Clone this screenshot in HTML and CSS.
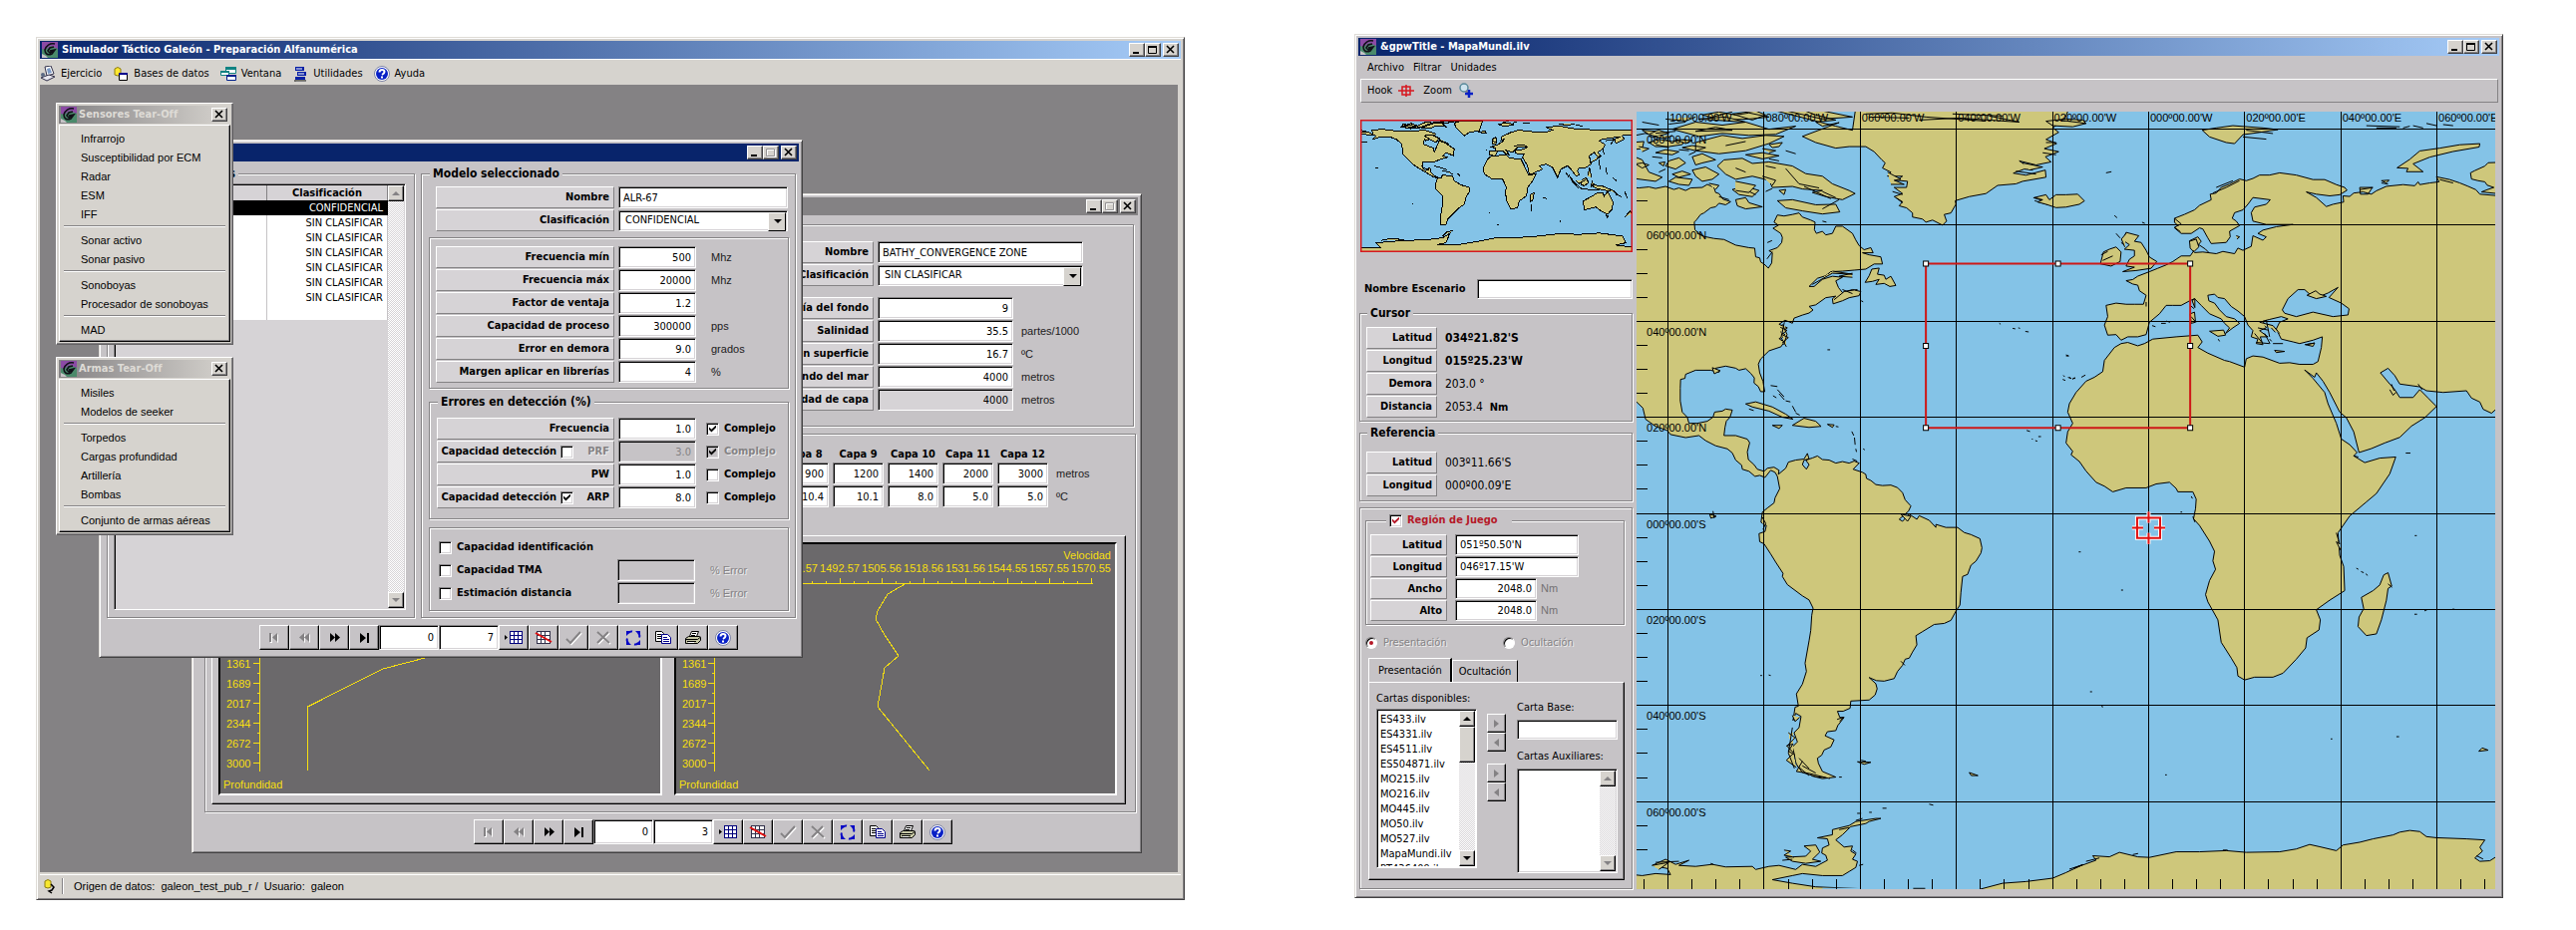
FILE: index.html
```html
<!DOCTYPE html>
<html lang="es">
<head>
<meta charset="utf-8">
<title>Simulador Táctico Galeón</title>
<link rel="stylesheet" href="styles.css">
</head>
<body>
<svg class="defs" aria-hidden="true">
  <symbol id="logo" viewBox="0 0 16 16"><rect width="16" height="16" fill="#4a8a6b"/><path d="M0 0h16v7L9 4 3 8 0 7z" fill="#8c4aa5"/><path d="M0 12l4 2 2 2H0z" fill="#c6c3c6"/><path d="M13 2C8 1 4 4 3 8c0 4 3 6 7 4l3-4-5 1M12 5L8 6 6 9l2 2 5-3" fill="none" stroke="#101018" stroke-width="1.6"/></symbol>
  <symbol id="first" viewBox="0 0 20 16"><path d="M6 4h2v9H6zM14 4v9L9 8.500z" fill="#fff"/><path d="M5 3h2v9H5zM13 3v9L8 7.500z" fill="#848284"/></symbol>
  <symbol id="prev" viewBox="0 0 20 16"><path d="M11 4v9L6 8.500zM16 4v9l-5-4.500z" fill="#fff"/><path d="M10 3v9L5 7.500zM15 3v9l-5-4.500z" fill="#848284"/></symbol>
  <symbol id="next" viewBox="0 0 20 16"><path d="M6 3v9l5-4.500zM11 3v9l5-4.500z"/></symbol>
  <symbol id="last" viewBox="0 0 20 16"><path d="M6 3v10l6-5zM13 3h2v10h-2z"/></symbol>
  <symbol id="grid" viewBox="0 0 20 16"><path d="M1 5v5l3-2.500z"/><path d="M6 2h12v12H6z" fill="#fff"/><path d="M6 1.500h13M6 5.500h13M6 9.500h13M6 13.500h13M6.500 1v13M10.500 1v13M14.500 1v13M18.500 1v13" stroke="#00007b" fill="none"/></symbol>
  <symbol id="nogrid" viewBox="0 0 20 16"><path d="M3 2h13v12H3z" fill="#fff"/><path d="M3 1.500h14M3 5.500h14M3 9.500h14M3 13.500h14M3.500 1v13M7.500 1v13M11.500 1v13M16.500 1v13" stroke="#31304a" fill="none"/><path d="M2 3l16 9" stroke="#e01010" stroke-width="2"/></symbol>
  <symbol id="ok" viewBox="0 0 20 16"><path d="M4 10l4 4 10-11" stroke="#fff" stroke-width="2" fill="none"/><path d="M3 9l4 4L17 2" stroke="#848284" stroke-width="2" fill="none"/></symbol>
  <symbol id="cancel" viewBox="0 0 20 16"><path d="M5 3l12 11M16 3L5 14" stroke="#fff" stroke-width="2"/><path d="M4 2l12 11M15 2L4 13" stroke="#848284" stroke-width="2"/></symbol>
  <symbol id="cycle" viewBox="0 0 20 16"><path d="M3 1h5L3 6zM17 1v5l-5-5zM17 15h-5l5-5zM3 15v-5l5 5z" fill="#0808c6"/><path d="M5 3Q7 1 9 1.500M15 3q2 2 1 4.500M15 13q-2 2-4 1.500M5 13q-2-2-1-4.500" stroke="#0808c6" stroke-width="2" fill="none"/></symbol>
  <symbol id="copy" viewBox="0 0 20 16"><path d="M2.500 1.500h6l2 2v8h-8z" fill="#fff" stroke="#000"/><path d="M4 4.500h4M4 6.500h5M4 8.500h5" stroke="#000"/><path d="M8.500 4.500h6l3 3v6h-9z" fill="#fff" stroke="#00008c"/><path d="M10 7.500h4M10 9.500h6M10 11.500h6" stroke="#00008c"/></symbol>
  <symbol id="print" viewBox="0 0 20 16"><path d="M6.500 6.500l2-5h7l-2 5z" fill="#fff" stroke="#000"/><path d="M9 3.500h4M8 5.500h4" stroke="#000"/><path d="M2.500 8.500l3-2h11l1 1v3l-3 3h-12z" fill="#c6c7a5" stroke="#000"/><path d="M2.500 9.500h12l3-2.500M4 11.500h9" stroke="#000" fill="none"/><path d="M5 12.500h6" stroke="#fff"/></symbol>
  <symbol id="help" viewBox="0 0 16 16"><circle cx="8" cy="8" r="7.500" fill="#fff" stroke="#7b82a5"/><circle cx="8" cy="8" r="6" fill="#0820c6"/><path d="M5.500 6.500q0-2.500 2.500-2.500t2.500 2q0 1.500-2.500 3M8 10.500v2" stroke="#fff" stroke-width="2" fill="none"/></symbol>
  <symbol id="min" viewBox="0 0 12 10"><path d="M2 7h6v2H2z"/></symbol>
  <symbol id="max" viewBox="0 0 12 10"><path d="M1.500 1.500h8v7h-8z" fill="none" stroke="#000"/><path d="M1 1h9v2H1z"/></symbol>
  <symbol id="maxoff" viewBox="0 0 12 10"><path d="M2.500 2.500h8v7h-8z" fill="none" stroke="#fff"/><path d="M1.500 1.500h8v7h-8z" fill="none" stroke="#949294"/></symbol>
  <symbol id="close" viewBox="0 0 12 10"><path d="M2 1l7 7M9 1L2 8" stroke="#000" stroke-width="1.600"/></symbol>
</svg>

<main class="screens">
<section class="win app">
  <header class="titlebar grad"><svg class="ico"><use href="#logo"/></svg><h1>Simulador Táctico Galeón - Preparación Alfanumérica</h1>
    <span class="ctl"><button aria-label="Minimizar"><svg><use href="#min"/></svg></button><button aria-label="Maximizar"><svg><use href="#max"/></svg></button><button class="x" aria-label="Cerrar"><svg><use href="#close"/></svg></button></span></header>
  <nav class="menubar">
    <button><svg class="ico" viewBox="0 0 16 16"><path d="M5 1l6-1 3 8-7 2z" fill="#fff" stroke="#31304a"/><path d="M7 3l3-1 2 5-4 1z" fill="#7b9ac6"/><path d="M1 12l8-3 6 2-8 4z" fill="#e7e7ef" stroke="#31304a"/><circle cx="3" cy="9" r="2" fill="#5a6984"/></svg>Ejercicio</button>
    <button><svg class="ico" viewBox="0 0 16 16"><path d="M2 3q3-3 6 0v6q-3 2-6 0z" fill="#ffe731" stroke="#8c7d10"/><path d="M6.500 7.500h8v7h-8z" fill="#fff" stroke="#000"/><path d="M6 7h9v2H6z" fill="#00008c"/></svg>Bases de datos</button>
    <button><svg class="ico" viewBox="0 0 16 16"><path d="M5.500 1.500h10v6h-10z" fill="#fff" stroke="#108282"/><path d="M5 1h11v3H5z" fill="#108282"/><path d="M.5 5.500h8v4h-8z" fill="#fff" stroke="#108282"/><path d="M0 5h9v2H0z" fill="#108282"/><path d="M6.500 9.500h9v5h-9z" fill="#fff" stroke="#00208c"/><path d="M6 9h10v2H6z" fill="#00208c"/></svg>Ventana</button>
    <button><svg class="ico" viewBox="0 0 16 16"><path d="M3 1h9v4H3zM5 6h9v4H5zM3 11h10v3H3z" fill="#0820a5"/><path d="M4 3h6M6 8h6M4 15.500h10" stroke="#fff"/><path d="M2 15h12" stroke="#000"/></svg>Utilidades</button>
    <button><svg class="ico"><use href="#help"/></svg>Ayuda</button>
  </nav>
  <div class="desktop">

    <section class="win child bathy">
      <header class="titlebar gray"><span class="ctl"><button aria-label="Minimizar"><svg><use href="#min"/></svg></button><button aria-label="Maximizar" disabled><svg><use href="#maxoff"/></svg></button><button class="x" aria-label="Cerrar"><svg><use href="#close"/></svg></button></span></header>
      <div class="bathy-body">
        <div class="etched bathy-form">
          <div class="rows">
            <div class="row"><label class="tag" for="b1">Nombre</label><input class="wide" id="b1" value="BATHY_CONVERGENCE ZONE"></div>
            <div class="row"><label class="tag" for="b2">Clasificación</label><span class="combo wide"><select id="b2"><option>SIN CLASIFICAR</option></select></span></div>
          </div>
          <div class="rows">
            <div class="row"><label class="tag" for="b3">Categoría del fondo</label><input class="num" id="b3" value="9"></div>
            <div class="row"><label class="tag" for="b4">Salinidad</label><input class="num" id="b4" value="35.5"><span class="unit">partes/1000</span></div>
            <div class="row"><label class="tag" for="b5">Temp. en superficie</label><input class="num" id="b5" value="16.7"><span class="unit">ºC</span></div>
            <div class="row"><label class="tag" for="b6">Fondo del mar</label><input class="num" id="b6" value="4000"><span class="unit">metros</span></div>
            <div class="row"><label class="tag" for="b7">Profundidad de capa</label><input class="num ro" id="b7" value="4000" readonly><span class="unit">metros</span></div>
          </div>
        </div>
        <div class="etched bathy-data">
          <table class="layers">
            <thead><tr><th>Capa 8</th><th>Capa 9</th><th>Capa 10</th><th>Capa 11</th><th>Capa 12</th><th></th></tr></thead>
            <tbody>
            <tr><td><input aria-label="Profundidad 8" value="900"></td><td><input aria-label="Profundidad 9" value="1200"></td><td><input aria-label="Profundidad 10" value="1400"></td><td><input aria-label="Profundidad 11" value="2000"></td><td><input aria-label="Profundidad 12" value="3000"></td><td class="unit">metros</td></tr>
            <tr><td><input aria-label="Temperatura 8" value="10.4"></td><td><input aria-label="Temperatura 9" value="10.1"></td><td><input aria-label="Temperatura 10" value="8.0"></td><td><input aria-label="Temperatura 11" value="5.0"></td><td><input aria-label="Temperatura 12" value="5.0"></td><td class="unit">ºC</td></tr>
            </tbody>
          </table>
          <div class="charts">
            <div class="chart"><svg>
              <path class="ax" d="M39.500 40V228M33 119.500h7M33 139.500h7M33 159.500h7M33 179.500h7M33 199.500h7M33 219.500h7M37 129.500h3M37 149.500h3M37 169.500h3M37 189.500h3M37 209.500h3"/>
              <path class="ax" d="M230 105L211 112.500 163 125 87.500 163V227"/>
              <g class="ct"><text x="6" y="124">1361</text><text x="6" y="144">1689</text><text x="6" y="164">2017</text><text x="6" y="184">2344</text><text x="6" y="204">2672</text><text x="6" y="224">3000</text><text x="3" y="245">Profundidad</text></g></svg></div>
            <div class="chart"><svg>
              <path class="ax" d="M38.500 40V228M32 119.500h7M32 139.500h7M32 159.500h7M32 179.500h7M32 199.500h7M32 219.500h7M36 129.500h3M36 149.500h3M36 169.500h3M36 189.500h3M36 209.500h3"/>
              <path class="ax" d="M100 39.500H418M164.500 34v6M206.500 34v6M248.500 34v6M290.500 34v6M332.500 34v6M374.500 34v6M416.500 34v6M136.500 37v3M150.500 37v3M178.500 37v3M192.500 37v3M220.500 37v3M234.500 37v3M262.500 37v3M276.500 37v3M304.500 37v3M318.500 37v3M346.500 37v3M360.500 37v3M388.500 37v3M402.500 37v3"/>
              <path class="ax" d="M230 39.500L212 50 202 67 200 75 209 91 223 112 209 124 202 163 254 227"/>
              <g class="ct"><text x="6" y="124">1361</text><text x="6" y="144">1689</text><text x="6" y="164">2017</text><text x="6" y="184">2344</text><text x="6" y="204">2672</text><text x="6" y="224">3000</text><text x="3" y="245">Profundidad</text></g>
              <g class="ct mid"><text x="122" y="28">1479.57</text><text x="164" y="28">1492.57</text><text x="206" y="28">1505.56</text><text x="248" y="28">1518.56</text><text x="290" y="28">1531.56</text><text x="332" y="28">1544.55</text><text x="374" y="28">1557.55</text><text x="416" y="28">1570.55</text></g>
              <text class="ct end" x="436" y="15">Velocidad</text></svg></div>
          </div>
        </div>
        <div class="navbar">
          <button class="tb" aria-label="Primero" disabled><svg><use href="#first"/></svg></button><button class="tb" aria-label="Anterior" disabled><svg><use href="#prev"/></svg></button><button class="tb" aria-label="Siguiente"><svg><use href="#next"/></svg></button><button class="tb" aria-label="Último"><svg><use href="#last"/></svg></button><input aria-label="Posición" value="0"><input aria-label="Total" value="3"><button class="tb" aria-label="Insertar"><svg><use href="#grid"/></svg></button><button class="tb" aria-label="Borrar"><svg><use href="#nogrid"/></svg></button><button class="tb" aria-label="Aceptar" disabled><svg><use href="#ok"/></svg></button><button class="tb" aria-label="Cancelar" disabled><svg><use href="#cancel"/></svg></button><button class="tb" aria-label="Recargar"><svg><use href="#cycle"/></svg></button><button class="tb" aria-label="Copiar"><svg><use href="#copy"/></svg></button><button class="tb" aria-label="Imprimir"><svg><use href="#print"/></svg></button><button class="tb" aria-label="Ayuda"><svg><use href="#help"/></svg></button>
        </div>
      </div>
    </section>

    <section class="win child model">
      <header class="titlebar navy"><span class="ctl"><button aria-label="Minimizar"><svg><use href="#min"/></svg></button><button aria-label="Maximizar" disabled><svg><use href="#maxoff"/></svg></button><button class="x" aria-label="Cerrar"><svg><use href="#close"/></svg></button></span></header>
      <div class="model-body">
        <fieldset class="etched models"><legend>Modelos existentes</legend>
          <div class="listbox">
            <table>
              <thead><tr><th></th><th>Clasificación</th></tr></thead>
              <tbody><tr class="sel"><td></td><td>CONFIDENCIAL</td></tr><tr><td></td><td>SIN CLASIFICAR</td></tr><tr><td></td><td>SIN CLASIFICAR</td></tr><tr><td></td><td>SIN CLASIFICAR</td></tr><tr><td></td><td>SIN CLASIFICAR</td></tr><tr><td></td><td>SIN CLASIFICAR</td></tr><tr><td></td><td>SIN CLASIFICAR</td></tr><tr><td></td><td></td></tr></tbody>
            </table>
            <div class="scroll"><button class="up" aria-label="Subir" disabled></button><button class="down" aria-label="Bajar" disabled></button></div>
          </div>
        </fieldset>
        <fieldset class="etched selected"><legend>Modelo seleccionado</legend>
          <div class="rows top">
            <div class="row"><label class="tag" for="m1">Nombre</label><input class="wide" id="m1" value="ALR-67"></div>
            <div class="row"><label class="tag" for="m2">Clasificación</label><span class="combo wide"><select id="m2"><option>CONFIDENCIAL</option></select></span></div>
          </div>
          <div class="etched rows block">
            <div class="row"><label class="tag" for="m3">Frecuencia mín</label><input class="num" id="m3" value="500"><span class="unit">Mhz</span></div>
            <div class="row"><label class="tag" for="m4">Frecuencia máx</label><input class="num" id="m4" value="20000"><span class="unit">Mhz</span></div>
            <div class="row"><label class="tag" for="m5">Factor de ventaja</label><input class="num" id="m5" value="1.2"></div>
            <div class="row"><label class="tag" for="m6">Capacidad de proceso</label><input class="num" id="m6" value="300000"><span class="unit">pps</span></div>
            <div class="row"><label class="tag" for="m7">Error en demora</label><input class="num" id="m7" value="9.0"><span class="unit">grados</span></div>
            <div class="row"><label class="tag" for="m8">Margen aplicar en librerías</label><input class="num" id="m8" value="4"><span class="unit">%</span></div>
          </div>
          <fieldset class="etched rows errors"><legend>Errores en detección (%)</legend>
            <div class="row"><label class="tag" for="e1">Frecuencia</label><input class="num" id="e1" value="1.0"><label class="chk"><input type="checkbox" checked>Complejo</label></div>
            <div class="row"><span class="tag"><label class="rev">Capacidad detección<input type="checkbox"></label><label class="code off" for="e2">PRF</label></span><input class="num" id="e2" value="3.0" disabled><label class="chk off"><input type="checkbox" checked disabled>Complejo</label></div>
            <div class="row"><label class="tag" for="e3">PW</label><input class="num" id="e3" value="1.0"><label class="chk"><input type="checkbox">Complejo</label></div>
            <div class="row"><span class="tag"><label class="rev">Capacidad detección<input type="checkbox" checked></label><label class="code" for="e4">ARP</label></span><input class="num" id="e4" value="8.0"><label class="chk"><input type="checkbox">Complejo</label></div>
          </fieldset>
          <div class="etched rows caps">
            <div class="row"><label class="chk"><input type="checkbox">Capacidad identificación</label></div>
            <div class="row"><label class="chk"><input type="checkbox">Capacidad TMA</label><input class="num" aria-label="Error TMA" disabled><span class="unit off">% Error</span></div>
            <div class="row"><label class="chk"><input type="checkbox">Estimación distancia</label><input class="num" aria-label="Error distancia" disabled><span class="unit off">% Error</span></div>
          </div>
        </fieldset>
      </div>
      <div class="navbar">
        <button class="tb" aria-label="Primero" disabled><svg><use href="#first"/></svg></button><button class="tb" aria-label="Anterior" disabled><svg><use href="#prev"/></svg></button><button class="tb" aria-label="Siguiente"><svg><use href="#next"/></svg></button><button class="tb" aria-label="Último"><svg><use href="#last"/></svg></button><input aria-label="Posición" value="0"><input aria-label="Total" value="7"><button class="tb" aria-label="Insertar"><svg><use href="#grid"/></svg></button><button class="tb" aria-label="Borrar"><svg><use href="#nogrid"/></svg></button><button class="tb" aria-label="Aceptar" disabled><svg><use href="#ok"/></svg></button><button class="tb" aria-label="Cancelar" disabled><svg><use href="#cancel"/></svg></button><button class="tb" aria-label="Recargar"><svg><use href="#cycle"/></svg></button><button class="tb" aria-label="Copiar"><svg><use href="#copy"/></svg></button><button class="tb" aria-label="Imprimir"><svg><use href="#print"/></svg></button><button class="tb" aria-label="Ayuda"><svg><use href="#help"/></svg></button>
      </div>
    </section>

    <section class="tear sensors">
      <header class="titlebar fade"><svg class="ico"><use href="#logo"/></svg><h2>Sensores Tear-Off</h2><span class="ctl"><button class="x" aria-label="Cerrar"><svg><use href="#close"/></svg></button></span></header>
      <div class="menu"><button>Infrarrojo</button><button>Susceptibilidad por ECM</button><button>Radar</button><button>ESM</button><button>IFF</button><hr><button>Sonar activo</button><button>Sonar pasivo</button><hr><button>Sonoboyas</button><button>Procesador de sonoboyas</button><hr><button>MAD</button></div>
    </section>
    <section class="tear weapons">
      <header class="titlebar fade"><svg class="ico"><use href="#logo"/></svg><h2>Armas Tear-Off</h2><span class="ctl"><button class="x" aria-label="Cerrar"><svg><use href="#close"/></svg></button></span></header>
      <div class="menu"><button>Misiles</button><button>Modelos de seeker</button><hr><button>Torpedos</button><button>Cargas profundidad</button><button>Artillería</button><button>Bombas</button><hr><button>Conjunto de armas aéreas</button></div>
    </section>
  </div>
  <footer class="status"><svg class="ico" viewBox="0 0 16 16"><path d="M3 3q3-3 6 0v6q-3 2-6 0z" fill="#f7e731" stroke="#8c7d10"/><path d="M9 6l3 3-2 3-3 1 3 2" stroke="#000" stroke-width="1.500" fill="none"/></svg><i class="sep"></i><span class="src">Origen de datos:&nbsp; galeon_test_pub_r /&nbsp; Usuario:&nbsp; galeon</span></footer>
</section>

<section class="win mapwin">
  <header class="titlebar grad"><svg class="ico"><use href="#logo"/></svg><h1>&amp;gpwTitle - MapaMundi.ilv</h1>
    <span class="ctl"><button aria-label="Minimizar"><svg><use href="#min"/></svg></button><button aria-label="Maximizar"><svg><use href="#max"/></svg></button><button class="x" aria-label="Cerrar"><svg><use href="#close"/></svg></button></span></header>
  <nav class="mapmenu"><button>Archivo</button><button>Filtrar</button><button>Unidades</button></nav>
  <div class="maptools">
    <button>Hook<svg class="ico" viewBox="0 0 16 16"><path d="M0 8h16M8 2v12" stroke="#d61820" stroke-width="1.500"/><path d="M4 4h8v8H4z" fill="none" stroke="#d61820" stroke-width="1.500"/></svg></button>
    <button>Zoom<svg class="ico" viewBox="0 0 16 16"><circle cx="6" cy="5" r="4" fill="#cfe3ee" stroke="#5a8a9c" stroke-width="1.500"/><path d="M8 8l3 4" stroke="#848284" stroke-width="2"/><path d="M11 7v8M7 11h8" stroke="#0820c6" stroke-width="2.500"/></svg></button>
  </div>
  <div class="mapbody">
    <aside class="side">
      <svg class="mini" viewBox="43 287 817 396" preserveAspectRatio="none">
        <path class="sea" d="M43 287h817v396H43z"/>
        <path class="land" d="M45 325L60 322 80 330 78 318 110 316 160 322 200 322 235 318 270 330 255 345 240 350 236 345 232 360 262 372 265 385 272 368 280 350 300 358 325 375 322 395 300 385 290 395 305 400 285 405 268 412 275 408 262 415 232 412 228 425 238 440 252 430 255 445 270 458 285 462 290 452 310 455 320 455 325 470 345 482 370 490 370 502 360 520 355 540 340 550 330 560 315 575 305 585 300 601 285 600 285 570 290 540 290 515 270 495 268 480 275 462 262 458 240 445 215 430 200 420 180 400 170 390 168 360 150 345 130 338 100 340 78 347 90 335 45 330Z
        M325 297L350 290 410 290 405 305 400 320 370 325 355 335 345 325 330 310ZM475 345L465 350 468 338 495 325 520 318 545 322 600 325 620 318 600 310 640 306 690 315 760 318 858 318 858 332 828 335 835 345 810 358 805 345 825 338 770 345 760 350 778 362 770 375 755 385 765 395 758 402 745 385 730 395 735 420 720 430 700 430 695 440 700 452 690 455 675 435 665 425 645 435 635 460 620 430 600 420 580 425 590 435 550 452 545 425 530 400 535 390 510 388 505 380 535 375 545 368 515 370 500 385 480 378 490 392 480 390 470 380 455 380 448 395 430 393 432 380 450 380 448 372 435 368 455 362 470 352Z
        M435 397L480 392 490 402 525 405 535 425 548 452 570 450 560 470 545 490 542 515 520 530 515 550 495 555 482 530 478 500 482 490 470 465 440 465 415 450 412 430 425 405ZM712 530L740 515 755 505 770 505 775 515 785 502 802 535 798 555 785 570 765 560 750 548 715 557ZM552 512L565 505 560 530 552 532ZM735 482L770 485 800 500 775 498 750 492ZM705 470L720 460 728 475 715 485 705 480ZM455 300L490 297 505 302 475 307ZM440 345L450 340 452 358 440 360Z
        M45 670L105 670 90 655 150 650 250 645 290 640 312 627 300 655 275 660 340 660 400 650 450 640 550 638 640 628 700 630 760 626 830 635 840 655 810 662 858 668V683H45Z"/>
        <path class="isle" d="M165 308l30-10 20 8 25-12 30 4 20-8 30 2-30 8 10 8-30-2-20 8-30-4-25 4zM170 300l60 10 40-14 30 2 50-10-90 8-40 16-50-6zM235 335l25-2 20 10-10 12-20-10zM270 338l15 12 25 10M395 325l22-4 4 6zM45 318l18 8M265 425l20 6 18 6M290 440l20 4 10 6M230 430l20 8M668 450l10 20 20 22M670 455l20 25 18 14M700 492l30 4 30 2M725 455l6-25 6 30M740 470l-6 20 10-12M768 485l35 15 14 12M765 390l-15 18-20 8M770 370l4 20M805 345l-10 15M780 350l25-4M835 580l18-20 4 8M88 430l10 2M440 350l10 6M505 365l30-2 10 6M470 295l20-4M500 298l12-5M530 296l22 2M640 300l25 4 20-4M690 302l20 5M45 355l20 0M420 378l2 2M780 572l8 2-4 6zM290 635l12-12 18-4M690 470l10 8 20-12M660 445l8 14M810 510l18 8M335 448l8 8M200 538l3 1M430 565l3 2M452 600l8 1M555 540l2 22M590 520l12 3M640 590l4 1M760 405l2 30M780 430l3 20M800 460l12 10M835 500l10 22M105 648l30-6 40 4"/>
        <path class="miniframe" d="M43 287h817v396H43z"/>
      </svg>
      <div class="scenario"><label for="sc">Nombre Escenario</label><input id="sc"></div>
      <fieldset class="etched cursor"><legend>Cursor</legend>
        <dl><dt class="tag">Latitud</dt><dd class="strong">034º21.82'S</dd><dt class="tag">Longitud</dt><dd class="strong">015º25.23'W</dd><dt class="tag">Demora</dt><dd>203.0 °</dd><dt class="tag">Distancia</dt><dd>2053.4 &nbsp;<b>Nm</b></dd></dl>
      </fieldset>
      <fieldset class="etched refer"><legend>Referencia</legend>
        <dl><dt class="tag">Latitud</dt><dd>003º11.66'S</dd><dt class="tag">Longitud</dt><dd>000º00.09'E</dd></dl>
      </fieldset>
      <div class="etched region">
        <fieldset class="etched game"><legend><label class="chk red"><input type="checkbox" checked>Región de Juego</label></legend>
          <div class="row"><label class="tag" for="g1">Latitud</label><input class="mid" id="g1" value="051º50.50'N"></div>
          <div class="row"><label class="tag" for="g2">Longitud</label><input class="mid" id="g2" value="046º17.15'W"></div>
          <div class="row"><label class="tag" for="g3">Ancho</label><input class="num" id="g3" value="2048.0"><span class="unit dim">Nm</span></div>
          <div class="row"><label class="tag" for="g4">Alto</label><input class="num" id="g4" value="2048.0"><span class="unit dim">Nm</span></div>
        </fieldset>
        <div class="radios"><label class="off"><input type="radio" name="v" checked disabled>Presentación</label><label class="off"><input type="radio" name="v" disabled>Ocultación</label></div>
        <div class="tabs"><button class="on">Presentación</button><button>Ocultación</button></div>
        <div class="pane">
          <div class="col"><span class="cap">Cartas disponibles:</span>
            <div class="listbox charts-list"><ul><li>ES433.ilv</li><li>ES4331.ilv</li><li>ES4511.ilv</li><li>ES504871.ilv</li><li>MO215.ilv</li><li>MO216.ilv</li><li>MO445.ilv</li><li>MO50.ilv</li><li>MO527.ilv</li><li>MapaMundi.ilv</li><li>PT436409.ilv</li></ul>
            <div class="scroll live"><button class="up" aria-label="Subir"></button><i class="thumb"></i><button class="down" aria-label="Bajar"></button></div></div></div>
          <div class="moves"><button class="r" aria-label="Poner base" disabled></button><button class="l" aria-label="Quitar base" disabled></button><button class="r gap" aria-label="Añadir auxiliar" disabled></button><button class="l" aria-label="Quitar auxiliar" disabled></button></div>
          <div class="col aux"><label class="cap" for="cb">Carta Base:</label><input id="cb"><span class="cap">Cartas Auxiliares:</span>
            <div class="listbox"><ul></ul><div class="scroll"><button class="up" aria-label="Subir" disabled></button><button class="down" aria-label="Bajar" disabled></button></div></div></div>
        </div>
      </div>
    </aside>
    <svg class="map" viewBox="0 0 861 777" preserveAspectRatio="xMinYMin slice">
      <path class="sea" d="M0 0h2000v1200H0z"/>
      <g transform="translate(-1 -12) scale(.33333 .5102)">
        <path class="land" d="M-10 172L10 173 40 171 60 174 90 170 115 176 130 173 150 178 165 173 200 172 215 166 235 172 240 182 250 184 262 195 285 200 270 206 250 203 240 210 225 212 205 222 195 225 182 236 176 240 178 255 190 262 205 268 235 272 265 274 300 285 340 290 357 291 360 308 372 310 375 318 385 322 398 330 408 320 410 300 400 296 425 290 438 280 440 270 435 262 412 252 428 246 415 240 425 226 445 228 470 225 490 222 500 230 525 236 538 240 536 255 542 262 560 258 570 265 590 262 600 248 620 248 650 262 660 275 670 286 685 294 705 290 712 300 680 300 700 304 735 308 740 322 715 322 690 332 655 334 620 336 585 337 570 345 545 350 520 366 535 366 560 352 590 346 620 348 600 355 608 368 620 378 650 372 675 376 670 384 640 388 620 394 592 400 590 390 600 385 570 388 540 402 520 405 532 412 520 418 500 422 475 428 470 438 448 432 430 440 455 447 435 455 452 462 430 468 445 475 436 484 400 492 375 508 368 518 372 535 382 552 387 572 375 572 368 562 355 555 356 545 345 536 330 527 310 530 300 526 270 522 240 526 250 534 225 530 180 530 150 538 148 546 135 548 134 565 134 590 140 612 155 622 160 634 185 634 215 630 232 622 237 612 260 610 270 606 290 608 283 622 272 630 268 642 265 658 300 658 335 665 342 672 335 690 338 705 355 715 365 724 385 728 395 722 415 720 430 726 428 734 450 722 458 710 480 706 505 704 515 693 520 704 505 706 500 715 512 724 520 715 510 706 530 702 545 698 560 705 580 706 600 712 620 709 640 712 655 708 670 712 652 724 680 730 690 734 692 742 705 746 720 754 740 756 765 755 785 760 800 770 808 784 825 796 818 806 790 822 800 826 820 812 843 822 850 815 880 824 900 838 900 832 930 838 965 838 985 848 1005 852 1032 860 1038 878 1035 888 1020 904 1005 912 995 930 980 934 975 965 972 990 960 1002 945 1020 925 1026 895 1028 860 1042 840 1050 843 1068 830 1082 820 1094 808 1096 800 1108 785 1120 775 1134 745 1139 722 1138 700 1132 720 1144 724 1154 718 1166 700 1176 645 1178 643 1192 622 1198 605 1198 612 1210 625 1210 606 1226 600 1236 575 1238 568 1246 595 1254 585 1268 565 1274 558 1284 545 1290 548 1300 560 1316 600 1327 560 1330 530 1325 510 1316 490 1310 480 1298 475 1280 470 1268 485 1258 475 1240 490 1230 496 1208 480 1202 472 1216 478 1190 488 1188 482 1164 500 1145 512 1120 508 1104 520 1060 525 1040 528 1010 532 996 520 980 500 972 455 950 440 934 442 928 420 906 405 890 385 870 372 866 370 850 388 846 392 834 376 828 380 808 395 800 415 790 418 780 432 762 425 738 418 730 405 726 388 740 372 736 358 738 340 728 320 724 318 716 300 706 290 692 275 684 240 678 210 668 190 658 150 662 105 656 95 648 60 640 30 626 22 604 -10 584Z
        M688 358L700 345 708 332 730 330 725 342 745 344 750 352 765 346 780 364 762 366 745 360 720 362 730 352 710 356Z
        M380 15L480 15 540 30 600 40 540 44 560 52 610 45 500 72 540 84 600 95 640 92 690 92 715 102 738 118 748 124 740 134 765 142 755 150 800 150 782 158 815 160 812 172 775 172 800 184 775 190 800 200 790 208 812 212 830 222 830 230 860 234 870 240 890 236 920 246 932 238 925 225 945 222 960 205 958 198 1000 190 1050 184 1085 168 1140 165 1160 160 1230 152 1228 138 1170 148 1132 144 1165 136 1190 138 1150 120 1200 128 1245 122 1228 112 1268 102 1225 96 1262 86 1230 78 1268 64 1250 55 1285 40 1300 15 660 15 650 60 600 52Z
        M245 130L265 118 320 115 350 125 400 122 470 130 510 145 560 150 590 165 640 178 658 184 620 196 570 190 530 182 560 178 500 175 470 170 410 172 400 158 350 150 300 156 270 146Z
        M425 198L470 196 540 206 600 205 612 220 560 224 500 218 450 212ZM300 196L330 192 340 202 380 210 330 214 305 208ZM100 160L120 152 170 156 160 168 130 166ZM100 120L130 114 150 124 120 136 90 130ZM170 112L200 106 240 118 200 124 180 128ZM-10 110L20 118 40 142 80 152 60 160 -10 154ZM180 84L260 70 320 76 390 70 445 72 400 86 330 100 250 106 180 100ZM110 58L180 44 260 50 330 44 400 58 480 52 420 68 340 70 260 66 190 72ZM-10 84L25 82 20 96 -10 98ZM170 138L210 132 250 146 230 156 200 160 180 150ZM330 596L360 592 410 602 450 616 472 626 440 622 400 610 350 602ZM470 638L505 624 540 630 556 640 520 642ZM410 638L440 638 430 644ZM575 636L595 637 590 642ZM452 22L560 22 650 34 560 38ZM290 28L360 22 390 30 350 40Z
        M40 84L70 78 110 82 150 78 140 88 100 92 60 92ZM60 104L90 98 130 102 110 108ZM140 94L170 90 210 94 180 100ZM200 30L250 24 300 30 340 26 400 34 340 38 260 40ZM30 66L70 60 100 66 60 72ZM330 108L380 104 430 110 380 116ZM110 146L140 140 165 146 130 152ZM290 176L330 170 370 178 350 190 310 186ZM0 126L20 124 40 128 20 134ZM70 124L88 122 84 130ZM400 88L440 84 430 92 410 94ZM430 178L450 176 445 186Z"/>
        <path class="isle" d="M40 72l50 4 20-6M60 88l40 6M60 66l60-4M120 78l50 2-20 6zM20 60l40 2-20 6zM0 70l30-4M190 38l80-4 60 10zM230 34l60-10M270 90l60-8M180 62l60-8 50 6zM380 150l40 8-10 10M390 180l20-6M450 135l40 30 60 8M560 180l40 12M300 160l60 8-20 14-40-4M340 180l20 6M505 170l80 24M560 214l50-18M560 238l12 2M690 28l80-2 100 8 180 8M700 34l120 2M850 40l120-4 180 8-90-12M950 28l150 4M395 280l14-4M394 312l16-14M575 490l8 0M530 362l60-22 60 2-60-6M595 392l30-16 40-4M620 372l30 8M650 340l-40 6 40 2M676 394l6 2M405 560l20 2M412 580l10 4M425 568l20 14M450 590l14 2M470 600l10 12M480 614l12 4M430 576l16 12M600 640l8 1M340 606l14 3M648 650l6 8M656 662l2 14M660 684l2 6M682 684l5 2M650 704l14 4M222 812l20 4-16 4zM232 806l4 14M380 818l10 12-8 12M795 812l30 4-10 10zM374 1128l5 0M399 1127l6 1M440 440l14 20-10 20M446 436l-10 30 16 18M434 446l20 6-16 8 20 6-18 10M458 1240l20 10-24 16 20 14-22 14 30 14M470 1230l-12 50 18 30M452 1266l20-4-14 14 20 8M480 1300l20 18 40 8 30 2M500 1296l-18 20 40 4 60 10M500 1305l40 14M490 1308l30 16M470 1206l8 12 14-8M604 1214l18-4-10 8M665 1297l40 1-20 4zM676 1294l14 2M1000 1318l26 6-20 0zM1090 438l4 2M1130 448l8 1M1147 447l5 1M1168 454l10 1M1290 500l8 2M1280 548l8 2M1282 540l4 3M1296 544l10 2M1310 546l8 0M1172 648l10 2M1207 660l8 0M1198 668l6 1M1188 664l2 2M610 1327l8 0M880 1380l12 2M740 1388l12 0M664 1398l12 0M700 1396l8 0M230 525l24 6-18 6zM795 1100l12 8M490 1290l30 20M1192 192l30 6M1196 198l40 8M205 268l-20-6M90 38l60 4 30-8M100 48l50-4M20 44l50 6M10 92l30 4-20 6M50 112l30 2M220 164l30 4-10 8M250 190l30 6M380 96l40 4-20 4M450 100l30 6M400 116l30 4M300 134l30 8M160 108l20-6M130 98l30 2M70 142l20-6M390 130l30 4M755 142l40 14-20 2 30 8-40 0M770 180l30 6M780 192l20 10M1140 140l60 6M1160 124l60 8-40 6M1220 104l40 4M1230 84l30 0"/>
        <path class="land" d="M-10 1518L20 1520 60 1516 105 1518 95 1506 50 1500 90 1488 120 1498 160 1490 130 1500 180 1502 230 1498 270 1503 350 1502 360 1508 400 1502 430 1500 480 1508 500 1498 540 1502 575 1490 570 1480 558 1476 560 1466 580 1460 575 1448 545 1446 590 1440 590 1430 640 1422 660 1414 720 1408 735 1408 700 1414 690 1418 645 1424 620 1440 600 1450 625 1464 650 1462 645 1472 660 1478 650 1488 665 1492 660 1504 640 1512 620 1520 560 1520 500 1516 470 1520 410 1528 470 1535 540 1542 1560 1570 -10 1570Z M505 1462L540 1460 552 1474 530 1488 555 1492 510 1496 470 1492 450 1484 510 1482 525 1472Z"/>
        <path class="sea" d="M560 1544h475v30H560z"/>
        <path class="isle" d="M445 1470l20 2-20 8 30 4M50 1500l50-6-30 14M60 1494l70-2M225 1496l8 2M610 1430l30-4M650 1470l12 6M670 1500l12-2M440 1490l30-2M660 1412l20-4M832 1545h36"/>
      </g>
      <g transform="translate(429 -87) scale(.33333 .56123)">
        <path class="land" d="M1320 245L1265 246 1255 252 1225 260 1212 264 1215 275 1235 278 1255 280 1262 286 1282 290 1262 294 1245 298 1310 302 1320 306 1240 302 1228 294 1205 288 1180 282 1150 276 1110 271 1118 280 1090 282 1060 285 1055 280 1045 287 1010 285 960 288 930 296 915 302 890 298 862 300 850 306 830 305 832 316 800 320 780 324 750 308 720 298 750 302 790 305 820 303 842 295 835 290 810 285 775 276 740 276 690 268 640 264 610 268 580 268 560 274 540 278 520 275 490 284 465 290 450 300 432 302 435 312 400 322 385 330 355 338 325 345 325 352 335 358 325 362 345 372 375 372 400 362 410 364 425 380 435 390 480 388 492 378 490 368 520 358 510 350 498 345 505 335 530 330 545 320 560 308 612 312 600 320 565 325 555 335 560 350 600 356 680 356 630 360 590 366 575 372 600 378 590 384 560 376 555 395 530 402 515 398 505 408 470 404 450 408 410 405 385 406 372 398 370 385 395 378 405 386 392 395 372 412 345 412 320 422 300 428 275 434 250 440 215 448 200 454 180 456 200 462 215 464 220 474 240 482 232 498 205 498 180 498 150 496 120 500 125 520 115 535 125 553 150 552 165 562 185 556 215 556 240 552 250 530 280 515 300 500 320 500 345 500 370 492 385 488 405 500 430 515 465 524 475 532 490 540 478 550 500 540 520 532 505 524 480 520 460 508 445 496 428 492 425 482 445 480 455 486 475 488 495 502 515 510 535 520 545 535 560 545 555 556 575 560 570 568 590 570 582 556 605 556 580 545 600 540 590 528 610 525 645 520 665 524 640 530 630 542 645 560 680 565 700 568 740 562 768 556 765 575 755 600 740 605 700 605 670 602 640 603 590 592 560 590 540 595 535 610 490 600 475 598 425 585 395 575 408 565 395 553 330 556 260 560 235 568 215 572 185 566 165 568 145 575 115 598 110 618 85 628 60 635 30 655 10 675 5 690 20 710 5 725 0 745 20 760 15 766 40 778 60 795 90 815 115 822 140 832 180 825 240 825 270 818 310 815 330 826 335 832 380 832 390 845 388 862 382 880 400 892 430 920 445 938 440 955 448 970 430 990 418 1015 425 1028 455 1060 465 1100 495 1128 512 1145 515 1160 535 1167 565 1162 620 1162 650 1155 690 1130 718 1110 722 1092 758 1078 762 1060 750 1042 790 1025 835 1008 832 965 820 945 815 905 850 875 900 850 930 835 970 800 988 770 940 772 895 780 862 768 872 762 850 748 825 738 810 710 785 675 775 655 740 630 715 615 745 628 750 620 770 635 790 655 820 690 840 700 862 725 878 762 915 755 955 745 1000 735 1035 715 1075 700 1110 680 1085 665 1060 650 1040 664 1000 664 985 650 970 640 942 620 965 612 985 625 1000 640 1060 645 1080 652 1130 655 1200 652 1215 665 1240 672 1250 685 1275 692 1290 684 1320 690Z
        M170 440L205 432 180 430 190 418 205 412 205 402 175 400 190 392 170 384 180 370 218 376 205 386 225 388 240 402 250 414 272 422 255 434 210 438ZM103 426L112 405 130 400 150 396 165 405 162 422 135 430ZM-95 308L-60 303 -50 312 -30 303 0 303 35 302 55 314 40 320 0 325 -30 326 -60 320 -85 316 -70 312ZM372 515L385 512 388 530 375 532ZM378 492L386 488 386 504ZM430 546L472 544 478 553 455 555ZM885 1020L920 1008 940 998 952 980 965 976 976 1000 965 1004 960 1025 945 1060 930 1085 900 1088 875 1072 878 1055 892 1040ZM992 255L1030 240 1060 225 1120 220 1180 214 1240 212 1238 218 1160 226 1090 236 1040 248 1070 262 1020 262 1025 256ZM408 188L450 184 500 180 590 184 635 187 580 192 530 196 505 212 480 210 430 200ZM-60 172L0 168 50 170 60 176 20 182 -40 180ZM880 290L918 290 905 302 882 302ZM718 570L745 567 740 573ZM625 580L655 582 630 584ZM945 278L968 277 960 282Z
        M-260 1540L-190 1529 -120 1526 -40 1520 0 1510 50 1496 25 1502 90 1488 80 1480 130 1482 160 1474 215 1482 250 1483 330 1473 400 1473 480 1471 540 1474 640 1473 690 1468 730 1460 760 1464 810 1471 830 1461 880 1456 920 1450 980 1443 1000 1438 1030 1435 1060 1437 1080 1446 1110 1448 1200 1450 1255 1452 1240 1465 1248 1472 1225 1484 1240 1490 1270 1489 1320 1470V1580H-260Z"/>
        <path class="sea coast" d="M648 508L665 488 695 472 715 472 730 480 760 484 785 478 815 468 788 486 825 496 848 506 845 517 800 520 740 512 690 520 655 514Z"/>
        <path class="land" d="M722 482L748 474 760 480 780 484 750 488Z"/>
        <path class="isle" d="M325 345l20 10-20 6 18 8M370 386l20-4 8 14-14 8M398 392l20 8 10 6M510 376l10 2-8 4M440 300l40-10 40-12M450 290l50-12M180 372l-14 10 10 14M150 372l12 8M165 388l8 4M145 340l8 4M228 352l8 2M120 264l16-2M-20 170l80 6M540 188l80 6M530 200l70 4M900 180l100 2M930 184l60 0M1010 184l20-3M1040 180l30 4M1080 176l30 4M1130 178l30 2M105 410l20-6M110 420l30-8M570 566l40 2M575 540l30 4M600 526l10 30M615 540l12 8M580 530l40 6 20 14M620 568l30 0M595 550l16 18M565 550l22 16M610 560l6 4M715 570l30-3M456 560l4 4M258 536l10 2M285 532l14 0M300 528l12 2M372 500l12 6M375 520l14 10M970 650l10 10 10-6M975 640l8 12M1055 640l12 10M1018 763l14 0M1045 910l6 0M870 968l6 2M884 974l8 2M898 978l6 3M1044 1050l8 0M1074 1044l8-2M1158 1041l6 0M38 939l6 0M165 1007l6 0M72 1188l6 0M106 1214l5 1M793 1272l5 0M990 1268l8 0M1237 1294l28-2-18-4zM297 1336l5 0M10 628l4 2M20 632l6-4M46 628l12-4M0 590l8 0M810 905l10 20-10-4 14 16M375 840l4 4M343 868l5 0M380 876l6 10M862 768l14 2M945 282l20 2M880 294l40-4M10 1504l40-8M60 1490l40-6M200 1478l16-2M470 1470l14 0M1230 1480l20 6M965 996l12 6M1120 276l40 6M240 494l0 8"/>
      </g>
      <path class="gridline" d="M31.500 0V777M127.500 0V777M223.500 0V777M319.500 0V777M415.500 0V777M511.500 0V777M607.500 0V777M703.500 0V777M799.500 0V777M0 17.500H861M0 113.500H861M0 209.500H861M0 305.500H861M0 401.500H861M0 497.500H861M0 593.500H861M0 689.500H861"/>
      <path class="gridline" d="M0 89.500h11M0 137.500h11M0 161.500h11M0 185.500h11M0 233.500h11M0 257.500h11M0 281.500h11M0 329.500h11M0 353.500h11M0 377.500h11M0 425.500h11M0 449.500h11M0 473.500h11M0 521.500h11M0 545.500h11M0 569.500h11M0 617.500h11M0 641.500h11M0 665.500h11M0 713.500h11M0 737.500h11M7.500 767v10M55.500 767v10M79.500 767v10M103.500 767v10M151.500 767v10M175.500 767v10M199.500 767v10M247.500 767v10M271.500 767v10M295.500 767v10M343.500 767v10M367.500 767v10M391.500 767v10M439.500 767v10M463.500 767v10M487.500 767v10M535.500 767v10M559.500 767v10M583.500 767v10M631.500 767v10M655.500 767v10M679.500 767v10M727.500 767v10M751.500 767v10M775.500 767v10M823.500 767v10M847.500 767v10"/>
      <g class="geo"><text x="33" y="10">100º00.00'W</text><text x="129" y="10">080º00.00'W</text><text x="225" y="10">060º00.00'W</text><text x="321" y="10">040º00.00'W</text><text x="417" y="10">020º00.00'W</text><text x="513" y="10">000º00.00'W</text><text x="609" y="10">020º00.00'E</text><text x="705" y="10">040º00.00'E</text><text x="801" y="10">060º00.00'E</text>
      <text x="10" y="32">080º00.00'N</text><text x="10" y="128">060º00.00'N</text><text x="10" y="224">040º00.00'N</text><text x="10" y="320">020º00.00'N</text><text x="10" y="416">000º00.00'S</text><text x="10" y="512">020º00.00'S</text><text x="10" y="608">040º00.00'S</text><text x="10" y="704">060º00.00'S</text></g>
      <path class="zone" d="M289 152h264v164H289z"/>
      <path class="handle" d="M286.500 149.500h5v5h-5zM418.500 149.500h5v5h-5zM550.500 149.500h5v5h-5zM286.500 231.500h5v5h-5zM550.500 231.500h5v5h-5zM286.500 313.500h5v5h-5zM418.500 313.500h5v5h-5zM550.500 313.500h5v5h-5z"/>
      <g class="target"><path class="halo" d="M500 406h23v20h-23zM495 416h11M517 416h11M511.500 400v11M511.500 421v11"/><path d="M500 406h23v20h-23zM495 416h11M517 416h11M511.500 400v11M511.500 421v11"/></g>
    </svg>
  </div>
</section>
</main>
</body>
</html>
```
FILE: styles.css
```css
:root {
  --face: #c6c3c6;
  --warm: #d6d3ce;
  --tag: #d6d3d6;
  --dark: #848284;
  --ui: "DejaVu Sans Condensed", "DejaVu Sans", sans-serif;
  --ms: "Liberation Sans", Arial, sans-serif;
}
* { box-sizing: border-box; }
body { margin: 0; background: #fff; color: #000; font: 11px/14px var(--ui); }
.defs { display: none; }
button, input, select { font: inherit; color: inherit; margin: 0; padding: 0; border-radius: 0; }
button { background: none; border: 0; }
svg { display: block; }
.ico { width: 16px; height: 16px; flex: none; }

.screens { display: grid; grid-template-columns: 1fr 1fr; gap: 170px; padding: 34px 73px 35px 36px; min-height: 100vh; }
.win { display: flex; flex-direction: column; background: var(--face); border: 1px solid; border-color: #dedbd6 #424142 #424142 #dedbd6; box-shadow: inset 1px 1px #fff, inset -1px -1px var(--dark); padding: 3px; }
.app { margin: 3px 0 -2px; background: var(--warm); }

.titlebar { display: flex; align-items: center; gap: 4px; height: 18px; padding: 0 2px; color: #fff; flex: none; }
.titlebar h1, .titlebar h2 { font-size: 11px; line-height: 18px; margin: 0; font-weight: bold; white-space: nowrap; }
.grad { background: linear-gradient(90deg, #08246b, #a5cbf7); }
.navy { background: #08246b; }
.gray { background: var(--dark); }
.fade { background: linear-gradient(90deg, #848284, #d6d3ce); color: #dedbd6; gap: 2px; }
.ctl { margin-left: auto; display: flex; }
.ctl button { width: 16px; height: 14px; display: grid; place-items: center; background: var(--warm); border: 1px solid; border-color: #fff #424142 #424142 #fff; box-shadow: inset -1px -1px var(--dark); }
.ctl svg { width: 12px; height: 10px; }
.ctl .x { margin-left: 2px; }

.menubar { display: flex; align-items: center; gap: 11px; height: 26px; padding: 2px 0 0; border-top: 1px solid #fff; background: var(--warm); }
.menubar button { display: flex; align-items: center; gap: 5px; }
.desktop { position: relative; flex: 1; min-height: 790px; background: var(--dark); overflow: hidden; margin-right: 3px; }
.status { display: flex; align-items: center; height: 22px; margin-top: 2px; padding: 0 2px; border-top: 1px solid #fff; font-family: var(--ms); }
.status .sep { width: 2px; height: 16px; margin: 0 10px 0 4px; border-left: 1px solid var(--dark); border-right: 1px solid #fff; }

.etched { border: 1px solid var(--dark); box-shadow: 1px 1px #fff, inset 1px 1px #fff; margin: 0; padding: 0; min-width: 0; }
legend { font-size: 12px; font-weight: bold; line-height: 14px; padding: 0 3px; margin-left: 1px; background: var(--face); }
.tag { display: block; height: 22px; line-height: 20px; padding: 0 4px; text-align: right; font-weight: bold; white-space: nowrap; background: var(--tag); border: 1px solid; border-color: #fff var(--dark) var(--dark) #fff; }
.row { display: flex; height: 22px; gap: 4px; align-items: center; }
.rows { display: flex; flex-direction: column; gap: 1px; }
.row .tag { flex: none; }
input, select { border: 1px solid; border-color: var(--dark) #fff #fff var(--dark); box-shadow: inset 1px 1px #000, inset -1px -1px var(--tag); background: #fff; height: 22px; padding: 0 4px; min-width: 0; outline: 0; }
.num, .navbar input, .layers input { text-align: right; }
input.ro, .listbox { background: var(--tag); }
input:disabled { background: var(--face); color: var(--dark); }
select { appearance: none; width: 100%; height: 21px; padding: 0 6px; opacity: 1; }
.combo { position: relative; display: block; }
.combo::before { content: ""; position: absolute; right: 2px; top: 2px; width: 16px; height: 17px; background: var(--warm); border: 1px solid; border-color: #fff #000 #000 #fff; pointer-events: none; }
.combo::after { content: ""; position: absolute; right: 6px; top: 9px; border: 4px solid transparent; border-top-color: #000; border-bottom: 0; pointer-events: none; }
.unit { font-family: var(--ms); font-size: 11px; color: #212021; white-space: nowrap; }
.off, .unit.off { color: var(--dark); text-shadow: 1px 1px #efefef; }
.chk { display: flex; align-items: center; gap: 5px; font-weight: bold; white-space: nowrap; }
input[type=checkbox] { appearance: none; width: 13px; height: 13px; padding: 0; flex: none; display: grid; place-items: center; }
input[type=checkbox]:checked::before { content: ""; width: 7px; height: 7px; background: #000; clip-path: polygon(0 30%, 35% 62%, 100% 0, 100% 35%, 35% 100%, 0 65%); }

.child { position: absolute; }
.model { left: 59px; top: 55px; width: 706px; height: 520px; }
.model-body { display: grid; grid-template-columns: 309px 1fr; gap: 6px; padding: 5px 3px 0 4px; flex: 1; }
.models { padding: 3px 8px 7px 6px; display: flex; flex-direction: column; }
.listbox { display: flex; border: 1px solid; border-color: var(--dark) #fff #fff var(--dark); box-shadow: inset 1px 1px #000; padding: 1px 1px 1px 2px; overflow: hidden; flex: 1; min-height: 0; }
.models .listbox { height: 100%; }
.models table { flex: 1; border-collapse: collapse; align-self: flex-start; table-layout: fixed; }
.models th, .models td { height: 15px; padding: 0 4px; line-height: 13px; text-align: right; white-space: nowrap; background: #fff; border-right: 1px solid var(--face); }
.models th { background: var(--tag); text-align: center; border-right: 1px solid var(--dark); }
.models th:last-child { width: 121px; }
.models .sel td { background: #000; color: #fff; border-color: #000; }
.scroll { width: 16px; flex: none; display: flex; flex-direction: column; justify-content: space-between; background: repeating-conic-gradient(#fff 0 25%, var(--tag) 0 50%) 0 0 / 2px 2px; }
.scroll button, .thumb { height: 16px; width: 16px; display: grid; place-items: center; background: var(--warm); border: 1px solid; border-color: #fff #000 #000 #fff; box-shadow: inset -1px -1px var(--dark); }
.scroll button::before { content: ""; border: 4px solid transparent; }
.scroll .up::before { border-bottom-color: #000; border-top: 0; }
.scroll .down::before { border-top-color: #000; border-bottom: 0; }
.scroll .up:disabled::before { border-bottom-color: var(--dark); }
.scroll .down:disabled::before { border-top-color: var(--dark); }
.scroll.live { justify-content: flex-start; }
.thumb { height: 36px; }
.live .down { margin-top: auto; }

.selected { padding: 6px 6px 6px 7px; }
.selected .top { padding: 0 1px 0 7px; margin-bottom: 6px; }
.selected .tag { width: 179px; }
.selected .wide { flex: 1; }
.selected .num { width: 78px; flex: none; }
.selected .unit { margin-left: 11px; }
.block { padding: 8px 6px 5px; margin-bottom: 6px; }
.errors { padding: 9px 6px 10px 7px; margin-bottom: 8px; }
.errors .tag { width: 178px; display: flex; align-items: center; justify-content: flex-end; }
.errors .num + .chk { margin-left: 6px; }
.errors .rev { display: flex; align-items: center; gap: 4px; margin-right: 12px; }
.errors .code { min-width: 24px; text-align: right; }
.caps { padding: 8px 6px 6px 9px; }
.caps .chk { width: 175px; flex: none; }
.navbar { display: flex; justify-content: center; padding: 7px 0 5px 96px; flex: none; }
.navbar input { width: 60px; height: 25px; }
.tb { width: 30px; height: 25px; display: grid; place-items: center; border: 1px solid; border-color: #fff #000 #000 #fff; box-shadow: inset -1px -1px var(--dark); background: var(--face); }
.tb svg { width: 20px; height: 16px; }

.bathy { left: 152px; top: 109px; width: 953px; height: 662px; }
.bathy-body { display: flex; flex-direction: column; flex: 1; padding: 9px 2px 0 9px; }
.bathy-body .navbar { padding-left: 86px; }
.bathy-form { margin-right: 2px; padding: 16px 0 14px; display: flex; flex-direction: column; gap: 11px; height: 203px; }
.bathy-form .row { justify-content: flex-end; padding-right: 50px; }
.bathy-form .tag { width: 240px; }
.bathy-form .wide { width: 206px; flex: none; }
.bathy-form .num { width: 136px; }
.bathy-form .num:last-child { margin-right: 70px; }
.bathy-form .num + .unit { width: 66px; padding-left: 4px; }
.bathy-data { margin-top: 7px; flex: 1; display: flex; flex-direction: column; padding: 11px 9px 7px 6px; }
.layers { align-self: flex-end; border-collapse: separate; border-spacing: 4px 1px; margin-bottom: 27px; table-layout: fixed; }
.layers th { height: 15px; padding: 0; font-weight: bold; white-space: nowrap; }
.layers td { padding: 0; width: 51px; }
.layers td.unit { width: 70px; padding-left: 4px; }
.layers input { display: block; width: 51px; }
.charts { flex: 1; display: grid; grid-template-columns: 1fr 1fr; gap: 12px; padding: 6px 8px 8px 6px; border: 1px solid; border-color: #fff #000 #000 #fff; box-shadow: inset -1px -1px var(--dark); }
.chart { background: #6b696b; border: 2px solid; border-color: #000 #fff #fff #000; overflow: hidden; min-height: 0; }
.chart svg { width: 100%; height: 100%; }
.ax { fill: none; stroke: #f7df10; shape-rendering: crispEdges; }
.ct { fill: #f7df10; font: 11px var(--ms); }
.ct.mid { text-anchor: middle; }
.end { text-anchor: end; }

.tear { position: absolute; left: 16px; width: 178px; padding: 2px; background: var(--warm); border: 1px solid; border-color: #fff #636163 #636163 #fff; box-shadow: inset -1px -1px var(--dark); }
.sensors { top: 18px; }
.weapons { top: 273px; }
.tear .titlebar { margin: 0 1px 1px 0; }
.menu { display: flex; flex-direction: column; padding: 3px 4px 2px; border: 1px solid; border-color: #fff #000 #000 #fff; box-shadow: inset -1px -1px var(--dark); }
.menu button { height: 19px; padding: 0 17px; text-align: left; font-family: var(--ms); white-space: nowrap; }
.menu hr { width: 100%; height: 2px; margin: 2px 0 3px; border: 0; border-top: 1px solid var(--dark); border-bottom: 1px solid #fff; }

.mapmenu { display: flex; gap: 9px; height: 23px; padding: 0 9px; }
.maptools { display: flex; gap: 9px; height: 24px; margin: 0 1px 9px 2px; padding: 0 6px; border: 1px solid; border-color: #fff var(--dark) var(--dark) #fff; }
.maptools button { display: flex; align-items: center; gap: 6px; }
.mapbody { display: grid; grid-template-columns: 279px 1fr; flex: 1; min-height: 0; padding-bottom: 5px; padding-right: 4px; }
.side { display: flex; flex-direction: column; padding: 8px 4px 0 1px; }
.mini { width: 273px; height: 133px; margin-left: 1px; overflow: hidden; }
.sea { fill: #84c3e7; }
.land { fill: #cec77b; }
.land, .coast, .isle { stroke: #000; stroke-width: 1; vector-effect: non-scaling-stroke; shape-rendering: crispEdges; }
.isle { fill: #cec77b; }
.miniframe { fill: none; stroke: #d61820; stroke-width: 3; vector-effect: non-scaling-stroke; }
.scenario { display: flex; align-items: center; justify-content: space-between; margin: 27px 0 7px; padding-left: 5px; font-weight: bold; }
.scenario input { width: 156px; height: 20px; }
.cursor, .refer { padding: 7px 6px 0; }
.cursor { padding-bottom: 3px; margin-bottom: 4px; }
.refer { padding: 12px 6px 4px; margin-bottom: 6px; }
dl { display: grid; grid-template-columns: 71px 1fr; gap: 1px 8px; margin: 0; align-items: center; }
dd { margin: 0; font-size: 12px; white-space: nowrap; }
dd b { font-size: 11px; }
.strong { font-weight: bold; }
.region { flex: 1; display: flex; flex-direction: column; padding: 5px 7px 8px 5px; }
.game { padding: 6px 4px 3px; }
.game legend { margin-left: 16px; padding-right: 14px; }
.game .row .tag { width: 77px; margin-right: 4px; height: 21px; }
.game input:not([type]) { height: 21px; }
.game .mid { width: 124px; }
.game .num { width: 82px; }
.red { color: #b51828; font-size: 11px; }
.red input:checked::before { background: #b51828; }
.dim { color: #737173; }
.radios { display: grid; grid-template-columns: 138px 1fr; padding: 11px 0 8px; }
.radios label { display: flex; align-items: center; gap: 6px; }
input[type=radio] { appearance: none; width: 12px; height: 12px; border-radius: 50%; padding: 0; background: #fff; display: grid; place-items: center; box-shadow: inset 1px 1px #000; }
input[type=radio]:checked::before { content: ""; width: 4px; height: 4px; border-radius: 50%; background: #b51828; }
.tabs { display: flex; align-items: flex-end; margin-left: 3px; }
.tabs button { height: 22px; padding: 0 6px; border: 1px solid; border-color: #fff #000 transparent #fff; border-bottom: 0; }
.tabs .on { height: 25px; margin-bottom: -1px; padding: 0 8px 0 9px; background: var(--face); border-right-width: 2px; }
.pane { flex: 1; min-height: 0; display: grid; grid-template-columns: 101px 20px 1fr; gap: 10px; margin-left: 3px; padding: 9px 6px 6px 7px; border: 1px solid; border-color: #fff #000 #000 #fff; box-shadow: inset -1px -1px var(--dark); }
.cap { display: block; white-space: nowrap; }
.col { display: flex; flex-direction: column; min-height: 0; min-width: 0; gap: 3px; }
.listbox ul { list-style: none; margin: 0; padding: 1px 1px; flex: 1; min-width: 0; line-height: 15px; background: #fff; overflow: hidden; }
.charts-list { height: 160px; flex: none; background: #fff; }
.moves { padding-top: 22px; }
.moves button { width: 19px; height: 19px; display: grid; place-items: center; border: 1px solid; border-color: #fff #000 #000 #fff; box-shadow: inset -1px -1px var(--dark); }
.moves .gap { margin-top: 12px; }
.moves button::before { content: ""; border: 4px solid transparent; }
.moves .r::before { border-left: 5px solid var(--dark); border-right: 0; }
.moves .l::before { border-right: 5px solid var(--dark); border-left: 0; }
.aux { padding-top: 9px; gap: 5px; }
.aux input { height: 20px; width: 100%; margin-bottom: 5px; }
.map { width: 100%; height: 100%; min-height: 0; }
.gridline { stroke: #000; fill: none; shape-rendering: crispEdges; }
.geo { font: 11px var(--ms); }
.zone { fill: none; stroke: #ce1818; stroke-width: 2; }
.handle { fill: #fff; stroke: #000; }
.target path { fill: none; stroke: #e01010; stroke-width: 2; }
.target .halo { stroke: #fff; stroke-width: 4; }
```
